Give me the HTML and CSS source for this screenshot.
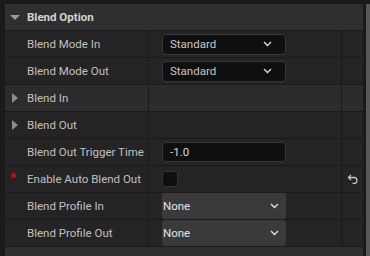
FILE: index.html
```html
<!DOCTYPE html>
<html lang="en">
<head>
    <meta charset="UTF-8">
    <title>Blend Option</title>
    <link rel="stylesheet" href="styles.css">
</head>
<body>
    <div class="panel">
        <div class="details">
            <div class="category">
                <span class="arrow-down"></span>
                <span class="category-name">Blend Option</span>
            </div>

            <div class="row">
                <div class="name">Blend Mode In</div>
                <div class="value">
                    <div class="combo">
                        <span>Standard</span>
                        <svg class="chevron" width="9" height="6" viewBox="0 0 9 6"><path d="M1 1 L4.5 4.5 L8 1" fill="none" stroke="#d8d8d8" stroke-width="1.4"/></svg>
                    </div>
                </div>
                <div class="reset"></div>
            </div>

            <div class="row">
                <div class="name">Blend Mode Out</div>
                <div class="value">
                    <div class="combo">
                        <span>Standard</span>
                        <svg class="chevron" width="9" height="6" viewBox="0 0 9 6"><path d="M1 1 L4.5 4.5 L8 1" fill="none" stroke="#d8d8d8" stroke-width="1.4"/></svg>
                    </div>
                </div>
                <div class="reset"></div>
            </div>

            <div class="row hovered">
                <div class="name"><span class="arrow-right"></span>Blend In</div>
                <div class="value"></div>
                <div class="reset"></div>
            </div>

            <div class="row">
                <div class="name"><span class="arrow-right"></span>Blend Out</div>
                <div class="value"></div>
                <div class="reset"></div>
            </div>

            <div class="row">
                <div class="name">Blend Out Trigger Time</div>
                <div class="value">
                    <div class="number-box">-1.0</div>
                </div>
                <div class="reset"></div>
            </div>

            <div class="row">
                <div class="name"><span class="dot"></span>Enable Auto Blend Out</div>
                <div class="value">
                    <div class="checkbox"></div>
                </div>
                <div class="reset">
                    <svg width="11" height="10" viewBox="0 0 11 10"><path d="M1.5 3.5 H7 A3 3 0 0 1 7 9.5 H5.5" fill="none" stroke="#c4c4c4" stroke-width="1.3"/><path d="M4 1 L1.5 3.5 L4 6" fill="none" stroke="#c4c4c4" stroke-width="1.3"/></svg>
                </div>
            </div>

            <div class="row">
                <div class="name">Blend Profile In</div>
                <div class="value">
                    <div class="asset-combo">
                        <span>None</span>
                        <svg class="chevron" width="9" height="6" viewBox="0 0 9 6"><path d="M1 1 L4.5 4.5 L8 1" fill="none" stroke="#e0e0e0" stroke-width="1.4"/></svg>
                    </div>
                </div>
                <div class="reset"></div>
            </div>

            <div class="row">
                <div class="name">Blend Profile Out</div>
                <div class="value">
                    <div class="asset-combo">
                        <span>None</span>
                        <svg class="chevron" width="9" height="6" viewBox="0 0 9 6"><path d="M1 1 L4.5 4.5 L8 1" fill="none" stroke="#e0e0e0" stroke-width="1.4"/></svg>
                    </div>
                </div>
                <div class="reset"></div>
            </div>

            <div class="category">
                <span class="arrow-down"></span>
                <span class="category-name">Animation</span>
            </div>
        </div>
        <div class="scrollbar"></div>
    </div>
</body>
</html>
```

FILE: styles.css
```css
/* Panel general */
body {
    margin: 0;
    padding: 0;
    background-color: #1a1a1a;
    font-family: 'Roboto', 'Liberation Sans', sans-serif;
    font-size: 11.5px;
    color: #c0c0c0;
    height: 256px;
    overflow: hidden;
}

.panel {
    display: flex;
    gap: 3px;
    padding: 4px 0 0 5px;
}

.details {
    width: 358px;
    display: flex;
    flex-direction: column;
}

.scrollbar {
    width: 4px;
    height: 260px;
    background-color: #575757;
}

/* Category header */
.category {
    height: 26px;
    border-bottom: 1px solid #1a1a1a;
    background-color: #2f2f2f;
    display: flex;
    align-items: center;
}

.arrow-down {
    width: 0;
    height: 0;
    margin: 0 7px 0 5px;
    border-left: 5px solid transparent;
    border-right: 5px solid transparent;
    border-top: 5px solid #9a9a9a;
}

.category-name {
    font-weight: bold;
    color: #d4d4d4;
}

/* Property rows */
.row {
    height: 26px;
    border-bottom: 1px solid #1a1a1a;
    background-color: #242424;
    display: flex;
}

.row.hovered {
    background-color: #2c2c2c;
}

.name {
    width: 143px;
    border-right: 1px solid #1a1a1a;
    display: flex;
    align-items: center;
    padding-left: 22px;
    box-sizing: border-box;
    width: 144px;
    position: relative;
}

.arrow-right {
    position: absolute;
    left: 7px;
    top: 8px;
    width: 0;
    height: 0;
    border-top: 5px solid transparent;
    border-bottom: 5px solid transparent;
    border-left: 6px solid #8c8c8c;
}

.dot {
    position: absolute;
    left: 6px;
    top: 7px;
    width: 5px;
    height: 5px;
    border-radius: 50%;
    background-color: #e00000;
}

.value {
    width: 193px;
    box-sizing: border-box;
    border-right: 1px solid #1a1a1a;
    display: flex;
    align-items: center;
    padding-left: 13px;
}

.reset {
    width: 21px;
    display: flex;
    align-items: center;
    justify-content: center;
}

/* Widgets */
.combo, .number-box {
    width: 124px;
    height: 21px;
    box-sizing: border-box;
    background-color: #0f0f0f;
    border: 1px solid #383838;
    border-radius: 4px;
    display: flex;
    align-items: center;
    justify-content: space-between;
    padding: 0 13px 0 7px;
    color: #c8c8c8;
}

.number-box {
    height: 20px;
    color: #d8d8d8;
}

.checkbox {
    width: 16px;
    height: 16px;
    box-sizing: border-box;
    background-color: #0f0f0f;
    border: 1px solid #333333;
    border-radius: 3px;
}

.asset-combo {
    width: 124px;
    height: 26px;
    box-sizing: border-box;
    background-color: #3a3a3a;
    border-radius: 3px;
    display: flex;
    align-items: center;
    justify-content: space-between;
    padding: 0 7px 0 1px;
    color: #e4e4e4;
}
```
